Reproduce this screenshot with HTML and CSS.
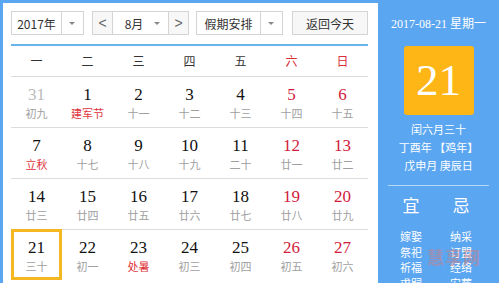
FILE: index.html
```html
<!DOCTYPE html>
<html lang="zh-CN">
<head>
    <meta charset="UTF-8">
    <title>万年历</title>
    <link rel="stylesheet" href="styles.css">
</head>
<body>
    <div class="calendar">
        <div class="main">
            <!-- toolbar -->
            <div class="toolbar">
                <div class="select year">
                    <span class="select-text">2017年</span>
                    <span class="select-arrow"></span>
                </div>
                <div class="month-group">
                    <span class="nav-btn">&lt;</span>
                    <div class="select month">
                        <span class="select-text">8月</span>
                        <span class="select-arrow"></span>
                    </div>
                    <span class="nav-btn">&gt;</span>
                </div>
                <div class="select holiday">
                    <span class="select-text">假期安排</span>
                    <span class="select-arrow"></span>
                </div>
                <button class="today-btn">返回今天</button>
            </div>

            <!-- week header -->
            <div class="week-head">
                <span>一</span><span>二</span><span>三</span><span>四</span><span>五</span>
                <span class="weekend">六</span><span class="weekend">日</span>
            </div>

            <!-- days -->
            <div class="days">
                <div class="cell other"><span class="num">31</span><span class="lunar">初九</span></div>
                <div class="cell"><span class="num">1</span><span class="lunar fest">建军节</span></div>
                <div class="cell"><span class="num">2</span><span class="lunar">十一</span></div>
                <div class="cell"><span class="num">3</span><span class="lunar">十二</span></div>
                <div class="cell"><span class="num">4</span><span class="lunar">十三</span></div>
                <div class="cell weekend"><span class="num">5</span><span class="lunar">十四</span></div>
                <div class="cell weekend"><span class="num">6</span><span class="lunar">十五</span></div>

                <div class="cell"><span class="num">7</span><span class="lunar fest">立秋</span></div>
                <div class="cell"><span class="num">8</span><span class="lunar">十七</span></div>
                <div class="cell"><span class="num">9</span><span class="lunar">十八</span></div>
                <div class="cell"><span class="num">10</span><span class="lunar">十九</span></div>
                <div class="cell"><span class="num">11</span><span class="lunar">二十</span></div>
                <div class="cell weekend"><span class="num">12</span><span class="lunar">廿一</span></div>
                <div class="cell weekend"><span class="num">13</span><span class="lunar">廿二</span></div>

                <div class="cell"><span class="num">14</span><span class="lunar">廿三</span></div>
                <div class="cell"><span class="num">15</span><span class="lunar">廿四</span></div>
                <div class="cell"><span class="num">16</span><span class="lunar">廿五</span></div>
                <div class="cell"><span class="num">17</span><span class="lunar">廿六</span></div>
                <div class="cell"><span class="num">18</span><span class="lunar">廿七</span></div>
                <div class="cell weekend"><span class="num">19</span><span class="lunar">廿八</span></div>
                <div class="cell weekend"><span class="num">20</span><span class="lunar">廿九</span></div>

                <div class="cell today"><span class="num">21</span><span class="lunar">三十</span></div>
                <div class="cell"><span class="num">22</span><span class="lunar">初一</span></div>
                <div class="cell"><span class="num">23</span><span class="lunar fest">处暑</span></div>
                <div class="cell"><span class="num">24</span><span class="lunar">初三</span></div>
                <div class="cell"><span class="num">25</span><span class="lunar">初四</span></div>
                <div class="cell weekend"><span class="num">26</span><span class="lunar">初五</span></div>
                <div class="cell weekend"><span class="num">27</span><span class="lunar">初六</span></div>
            </div>
        </div>

        <!-- side panel -->
        <div class="side">
            <div class="side-date">2017-08-21 星期一</div>
            <div class="big-day">21</div>
            <div class="side-lunar">
                <p>闰六月三十</p>
                <p>丁酉年 【鸡年】</p>
                <p>戊申月 庚辰日</p>
            </div>
            <hr class="side-line">
            <div class="yiji">
                <span class="yiji-title">宜</span>
                <span class="yiji-title">忌</span>
                <span>嫁娶</span><span>纳采</span>
                <span>祭祀</span><span>订盟</span>
                <span>祈福</span><span>经络</span>
                <span>求嗣</span><span>安葬</span>
            </div>
            <div class="watermark">慧享网</div>
        </div>
    </div>
</body>
</html>
```

FILE: styles.css
```css
body {
    margin: 0;
    width: 499px;
    height: 283px;
    overflow: hidden;
    background-color: #5ba6f1;
    font-family: "Noto Sans CJK SC", sans-serif;
}

.calendar {
    display: flex;
    height: 283px;
}

/* left part */
.main {
    flex: 0 0 375px;
    box-sizing: border-box;
    margin: 3px 0 0 3px;
    padding: 8px 10px 0 8px;
    background-color: #fff;
}

.toolbar {
    display: flex;
    height: 24px;
    font-size: 12px;
    color: #333;
}

.select {
    display: flex;
    box-sizing: border-box;
    height: 24px;
    border: 1px solid #d4d4d4;
    background-color: #fff;
}

.select-text {
    flex: 1;
    display: flex;
    align-items: center;
    justify-content: center;
    border-right: 1px solid #d4d4d4;
}

.select-arrow {
    flex: 0 0 21px;
    position: relative;
}

.select-arrow::after {
    content: "";
    position: absolute;
    left: 7px;
    top: 10px;
    border-left: 3px solid transparent;
    border-right: 3px solid transparent;
    border-top: 3px solid #888;
}

.year {
    width: 73px;
    margin-right: 8px;
}

.month-group {
    display: flex;
    width: 97px;
    margin-right: 7px;
}

.nav-btn {
    display: flex;
    align-items: center;
    justify-content: center;
    box-sizing: border-box;
    width: 21px;
    height: 24px;
    border: 1px solid #d4d4d4;
    background-color: #f7f7f7;
    color: #666;
    font-family: "Liberation Sans", sans-serif;
    font-size: 14px;
}

.month {
    flex: 1;
    border-left: none;
    border-right: none;
}

.month .select-text {
    border-right: none;
    padding-left: 8px;
}

.holiday {
    width: 87px;
    margin-right: 9px;
}

.today-btn {
    width: 76px;
    height: 24px;
    padding: 0;
    border: 1px solid #d4d4d4;
    background-color: #f7f7f7;
    color: #333;
    font-family: "Noto Sans CJK SC", sans-serif;
    font-size: 12px;
}

.week-head {
    display: grid;
    grid-template-columns: repeat(7, 1fr);
    height: 30px;
    margin-top: 9px;
    border-top: 2px solid #6ab4ec;
    font-size: 12px;
    line-height: 30px;
    text-align: center;
    color: #333;
}

.week-head .weekend {
    color: #d9303a;
}

.days {
    display: grid;
    grid-template-columns: repeat(7, 1fr);
}

.cell {
    display: flex;
    flex-direction: column;
    align-items: center;
    box-sizing: border-box;
    height: 51px;
    padding-top: 8px;
    border-top: 1px solid #dcdcdc;
}

.num {
    font-family: "Liberation Serif", serif;
    font-size: 17px;
    line-height: 20px;
    color: #111;
}

.lunar {
    font-size: 11px;
    line-height: 16px;
    color: #a0a0a0;
}

.lunar.fest {
    color: #e0343c;
}

.cell.weekend .num {
    color: #d21c3c;
}

.cell.other .num {
    color: #bbb;
}

.cell.today {
    border: 3px solid #f5b822;
    padding-top: 6px;
}

/* right part */
.side {
    position: relative;
    flex: 1;
    padding-top: 16px;
    color: #fff;
    text-align: center;
}

.side-date {
    font-family: "Liberation Serif", "Noto Sans CJK SC", serif;
    font-size: 12px;
    line-height: 16px;
}

.big-day {
    width: 70px;
    height: 69px;
    margin: 14px auto 5px;
    border-radius: 3px;
    background-color: #fdb615;
    font-family: "Liberation Serif", serif;
    font-size: 45px;
    line-height: 69px;
}

.side-lunar p {
    margin: 0;
    font-size: 11px;
    line-height: 18px;
}

.side-line {
    height: 1px;
    margin: 11px 10px 0;
    border: 0;
    background-color: rgba(255, 255, 255, 0.55);
}

.yiji {
    display: grid;
    grid-template-columns: 50px 50px;
    justify-content: center;
    padding-right: 5px;
    margin-top: 7px;
    font-size: 11px;
    line-height: 15.5px;
}

.yiji-title {
    font-size: 17px;
    line-height: 24px;
    margin-bottom: 12px;
}

.watermark {
    position: absolute;
    left: 49px;
    top: 244px;
    font-size: 17px;
    font-weight: bold;
    color: rgba(225, 120, 110, 0.45);
    letter-spacing: 1px;
}
```
